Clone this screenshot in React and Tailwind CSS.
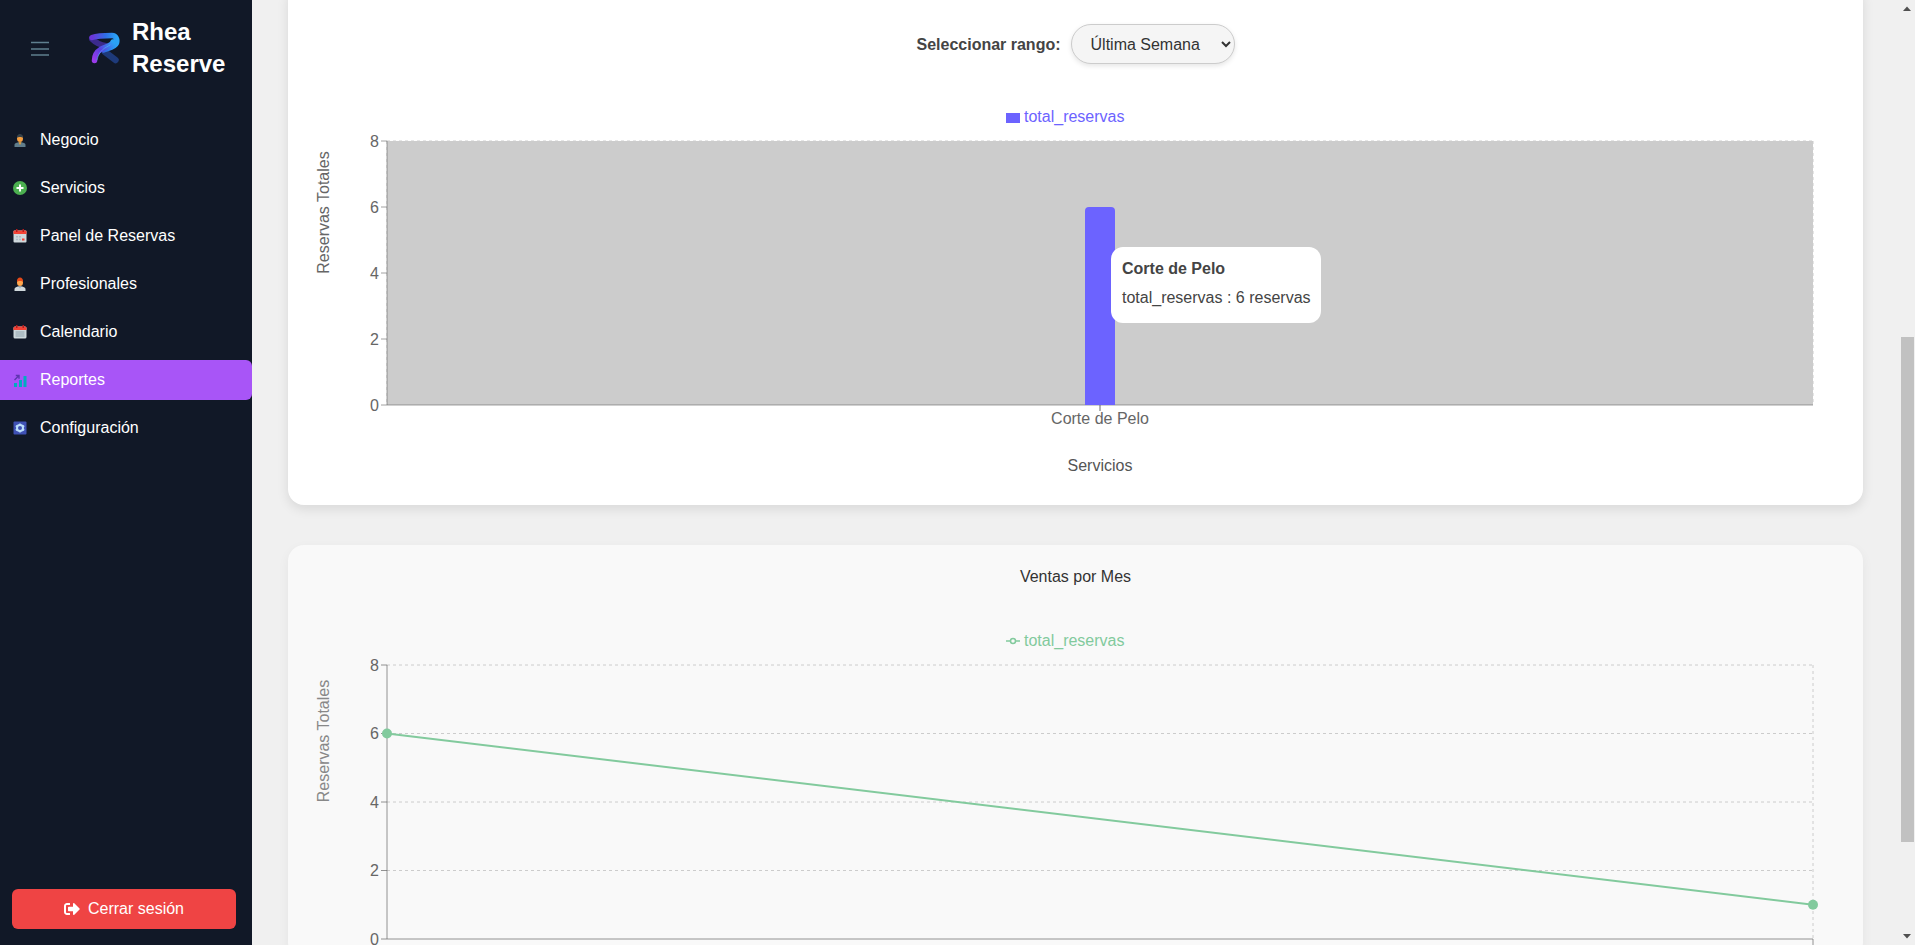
import React from 'react';
import { FaSignOutAlt } from 'react-icons/fa';

const BusinessIcon = () => (
  <svg width="16" height="16" viewBox="0 0 16 16">
    <path d="M2.500 15v-2.200c0-1.600 2-2.400 5.500-2.800 3.500.4 5.500 1.200 5.500 2.800V15z" fill="#607d8b" />
    <path d="M6.500 10.200 8 13l1.500-2.800z" fill="#e8a33d" />
    <ellipse cx="8" cy="6.500" rx="3" ry="3.600" fill="#f59e3f" />
    <path d="M5 5.800C4.800 3.200 6.300 2 8 2s3.200 1.200 3 3.800C10 4.800 6 4.800 5 5.800z" fill="#37424a" />
  </svg>
);

const PlusIcon = () => (
  <svg width="16" height="16" viewBox="0 0 16 16">
    <circle cx="8" cy="8" r="7" fill="#4caf50" />
    <path d="M8 4.500v7M4.500 8h7" stroke="#fff" strokeWidth="2" />
  </svg>
);

const BookingIcon = () => (
  <svg width="16" height="16" viewBox="0 0 16 16">
    <rect x="1.500" y="2.500" width="13" height="12" rx="1" fill="#cfd8dc" />
    <path d="M1.500 3.500a1 1 0 0 1 1-1h11a1 1 0 0 1 1 1V6h-13z" fill="#f44336" />
    <rect x="4" y="1" width="1.500" height="3" fill="#b71c1c" />
    <rect x="10.500" y="1" width="1.500" height="3" fill="#b71c1c" />
    <path d="M4 8h2v1.500H4zM7 8h2v1.500H7zM4 10.800h2v1.500H4zM7 10.800h2v1.500H7z" fill="#b0bec5" />
    <rect x="10" y="10.500" width="2.500" height="2" fill="#f44336" />
  </svg>
);

const ProIcon = () => (
  <svg width="16" height="16" viewBox="0 0 16 16">
    <path d="M2.500 15v-2c0-1.600 2-2.500 5.500-2.800 3.500.3 5.500 1.200 5.500 2.800v2z" fill="#cfd8dc" />
    <path d="M6.800 10.200 8 12.500l1.200-2.300z" fill="#90a4ae" />
    <ellipse cx="8" cy="6.500" rx="3" ry="3.500" fill="#ffa64d" />
    <path d="M5 6C4.600 3 6.200 1.500 8 1.500S11.400 3 11 6c-.8-1.400-5.200-1.400-6 0z" fill="#e64a19" />
  </svg>
);

const CalendarIcon = () => (
  <svg width="16" height="16" viewBox="0 0 16 16">
    <rect x="1.500" y="2.500" width="13" height="12" rx="1.500" fill="#cfd8dc" />
    <path d="M1.500 4a1.500 1.500 0 0 1 1.500-1.500h10A1.500 1.500 0 0 1 14.500 4v2h-13z" fill="#f44336" />
    <rect x="4" y="1" width="1.500" height="3" fill="#b71c1c" />
    <rect x="10.500" y="1" width="1.500" height="3" fill="#b71c1c" />
    <path d="M3.500 8h9M3.500 10h9M3.500 12h9" stroke="#90a4ae" strokeWidth="1" />
  </svg>
);

const ChartIcon = () => (
  <svg width="16" height="16" viewBox="0 0 16 16">
    <rect x="2" y="11" width="3" height="4" fill="#00acc1" />
    <rect x="7" y="8" width="3" height="7" fill="#00acc1" />
    <rect x="11.500" y="4" width="3" height="11" fill="#00acc1" />
    <path d="M2.500 8 6.500 4M3.800 3.500h3.200v3.200" stroke="#5e35b1" strokeWidth="1.400" fill="none" />
  </svg>
);

const GearIcon = () => (
  <svg width="16" height="16" viewBox="0 0 16 16">
    <rect x="1.500" y="1.500" width="13" height="13" rx="1" fill="#3f51b5" />
    <circle cx="8" cy="8" r="3" fill="none" stroke="#bbdefb" strokeWidth="2" />
    <path d="M8 3.500v2M8 10.500v2M3.800 5.700l1.700 1M10.500 9.300l1.700 1M3.800 10.300l1.700-1M10.500 6.700l1.700-1" stroke="#bbdefb" strokeWidth="1.600" />
  </svg>
);

const Logo = () => (
  <svg width="32" height="32" viewBox="0 0 32 32">
    <defs>
      <linearGradient id="logoTop" x1="0" y1="0" x2="1" y2="0">
        <stop offset="0" stopColor="#6d35d8" />
        <stop offset="0.55" stopColor="#2f6fe6" />
        <stop offset="1" stopColor="#2aa3f5" />
      </linearGradient>
      <linearGradient id="logoMid" x1="1" y1="0" x2="0" y2="1">
        <stop offset="0" stopColor="#2aa3f5" />
        <stop offset="0.55" stopColor="#5b3fe0" />
        <stop offset="1" stopColor="#9a3bea" />
      </linearGradient>
    </defs>
    <path d="M17 20 27.500 28" stroke="#1e3a7a" strokeWidth="6.500" strokeLinecap="round" fill="none" />
    <path d="M4 7C8 11 12 13 18 14" stroke="#3b2a8c" strokeWidth="6" strokeLinecap="round" fill="none" />
    <path d="M4 5.500C10 3.500 18 3.500 24 3.500c4 0 5.500 4 4.500 7.500-1.500 4-8 5-13 7" stroke="url(#logoTop)" strokeWidth="5.500" strokeLinecap="round" fill="none" />
    <path d="M25 10c-1 4-8 5-12.500 7.500C8.500 20 6.500 24 6.500 28.500" stroke="url(#logoMid)" strokeWidth="5.500" strokeLinecap="round" fill="none" />
    <path d="M22 13C17 16 11 18 9 28" stroke="#4fc3f7" strokeWidth="0.800" strokeLinecap="round" fill="none" opacity="0.7" />
  </svg>
);

const navItems = [
  { label: 'Negocio', Icon: BusinessIcon },
  { label: 'Servicios', Icon: PlusIcon },
  { label: 'Panel de Reservas', Icon: BookingIcon },
  { label: 'Profesionales', Icon: ProIcon },
  { label: 'Calendario', Icon: CalendarIcon },
  { label: 'Reportes', Icon: ChartIcon, active: true },
  { label: 'Configuración', Icon: GearIcon },
];

const Sidebar = () => (
  <aside className="w-[252px] h-screen shrink-0 bg-[#111827] flex flex-col text-white">
    <div className="flex items-center h-24 pl-[30px]">
      <svg width="20" height="16" viewBox="0 0 20 16" className="mt-0.5 text-[#5f7f8f]">
        <path d="M1 1.500h18M1 8h18M1 14h18" stroke="currentColor" strokeWidth="1.600" />
      </svg>
      <div className="ml-[38px]">
        <Logo />
      </div>
      <h1 className="ml-3 text-2xl font-bold leading-8">Rhea<br />Reserve</h1>
    </div>
    <nav className="mt-6 flex flex-col gap-2">
      {navItems.map(({ label, Icon, active }) => (
        <a key={label} className={`flex items-center h-10 pl-3 gap-3 text-base rounded-r-md ${active ? 'bg-[#a855f7]' : ''}`}>
          <Icon />
          <span>{label}</span>
        </a>
      ))}
    </nav>
    <button className="mt-auto mb-4 ml-3 mr-4 h-10 rounded-md bg-[#ef4444] flex items-center justify-center gap-2 text-base">
      <FaSignOutAlt className="text-base" />
      Cerrar sesión
    </button>
  </aside>
);

const gridDash = { stroke: '#ccc', strokeDasharray: '3 3', fill: 'none' };

const BarChartCard = () => {
  const ticks = [[8, 141], [6, 207], [4, 273], [2, 339], [0, 405]];
  return (
    <section className="-mt-4 bg-white rounded-2xl shadow-[0_4px_12px_rgba(0,0,0,0.1)] shrink-0">
      <div className="flex items-center justify-center gap-[10px] pt-10 pb-5">
        <label className="mt-[2px] font-bold text-base text-[#444]">Seleccionar rango:</label>
        <select className="w-[164px] h-10 pl-[15px] rounded-full border border-[#ccc] bg-[#f5f5f5] text-base text-[#333] shadow-[0_2px_5px_rgba(0,0,0,0.1)]">
          <option>Última Semana</option>
        </select>
      </div>
      <div className="relative">
        <svg width="1575" height="421" viewBox="288 84 1575 421" className="block" fontSize="16">
          <rect x="1006" y="113" width="14" height="10" fill="#6c63ff" />
          <text x="1024" y="122" fill="#6c63ff">total_reservas</text>

          <path d="M387 141H1813M387 207H1813M387 273H1813M387 339H1813M387 141V405M1813 141V405" {...gridDash} />
          <rect x="387" y="141" width="1426" height="264" fill="#ccc" />
          <path d="M387 141V405M387 405H1813" stroke="#666" fill="none" opacity="0.6" />
          {ticks.map(([v, y]) => (
            <g key={v}>
              <path d={`M381 ${y}H387`} stroke="#666" opacity="0.6" />
              <text x="379" y={y} dy="0.355em" textAnchor="end" fill="#666">{v}</text>
            </g>
          ))}
          <path d="M1085 405V211a4 4 0 0 1 4-4h22a4 4 0 0 1 4 4V405z" fill="#6c63ff" />
          <path d="M1100 405V411" stroke="#666" />
          <text x="1100" y="424" textAnchor="middle" fill="#666">Corte de Pelo</text>
          <text x="1100" y="471" textAnchor="middle" fill="#555">Servicios</text>
          <text transform="translate(323 212.500) rotate(-90)" dy="0.355em" textAnchor="middle" fill="#666">Reservas Totales</text>
        </svg>
        <div className="absolute left-[823px] top-[163px] w-[210px] h-[76px] bg-white rounded-xl px-[11px] pt-[7px] text-base leading-[29px] text-[#444] whitespace-nowrap">
          <p className="font-bold">Corte de Pelo</p>
          <p>total_reservas : 6 reservas</p>
        </div>
      </div>
    </section>
  );
};

const LineChartCard = () => {
  const ticks = [[8, 665], [6, 733.5], [4, 802], [2, 870.5], [0, 939]];
  return (
    <section className="bg-[#f9f9f9] rounded-2xl shadow-[0_4px_12px_rgba(0,0,0,0.05)] pt-5 shrink-0">
      <h3 className="text-center text-base leading-6 text-[#333]">Ventas por Mes</h3>
      <svg width="1575" height="369" viewBox="288 589 1575 369" className="block" fontSize="16">
        <path d="M1006 641H1020" stroke="#82ca9d" strokeWidth="1.500" />
        <circle cx="1013" cy="641" r="2.500" fill="#f9f9f9" stroke="#82ca9d" strokeWidth="1.500" />
        <text x="1024" y="646" fill="#82ca9d">total_reservas</text>

        <path d="M387 665H1813M387 733.500H1813M387 802H1813M387 870.500H1813M1813 665V939" {...gridDash} />
        <path d="M387 665V939M387 939H1813M1813 939V945" stroke="#666" fill="none" opacity="0.7" />
        {ticks.map(([v, y]) => (
          <g key={v}>
            <path d={`M381 ${y}H387`} stroke="#666" opacity="0.7" />
            <text x="379" y={y} dy="0.355em" textAnchor="end" fill="#666">{v}</text>
          </g>
        ))}
        <path d="M387 733.500 1813 904.750" stroke="#82ca9d" strokeWidth="2" fill="none" />
        <circle cx="387" cy="733.500" r="5" fill="#82ca9d" />
        <circle cx="1813" cy="904.750" r="5" fill="#82ca9d" />
        <text transform="translate(323 741) rotate(-90)" dy="0.355em" textAnchor="middle" fill="#888">Reservas Totales</text>
      </svg>
    </section>
  );
};

const Scrollbar = () => (
  <div className="w-[17px] h-screen shrink-0 bg-[#f0f0f0] flex flex-col">
    <svg width="17" height="17" viewBox="0 0 17 17" className="shrink-0">
      <path d="M5 11 9 6.500 13 11z" fill="#505050" />
    </svg>
    <div className="flex-1 pt-[320px] pl-[3px]">
      <div className="w-[13px] h-[505px] bg-[#c1c1c1]" />
    </div>
    <svg width="17" height="17" viewBox="0 0 17 17" className="shrink-0">
      <path d="M5 6 9 10.500 13 6z" fill="#505050" />
    </svg>
  </div>
);

const App = () => {
  return (
    <div className="flex h-screen overflow-hidden bg-[#f0f0f0] font-['Liberation_Sans',Arial,sans-serif]">
      <Sidebar />
      <main className="flex-1 h-screen overflow-hidden pl-9 pr-[35px] flex flex-col gap-10">
        <BarChartCard />
        <LineChartCard />
      </main>
      <Scrollbar />
    </div>
  );
};

export default App;
